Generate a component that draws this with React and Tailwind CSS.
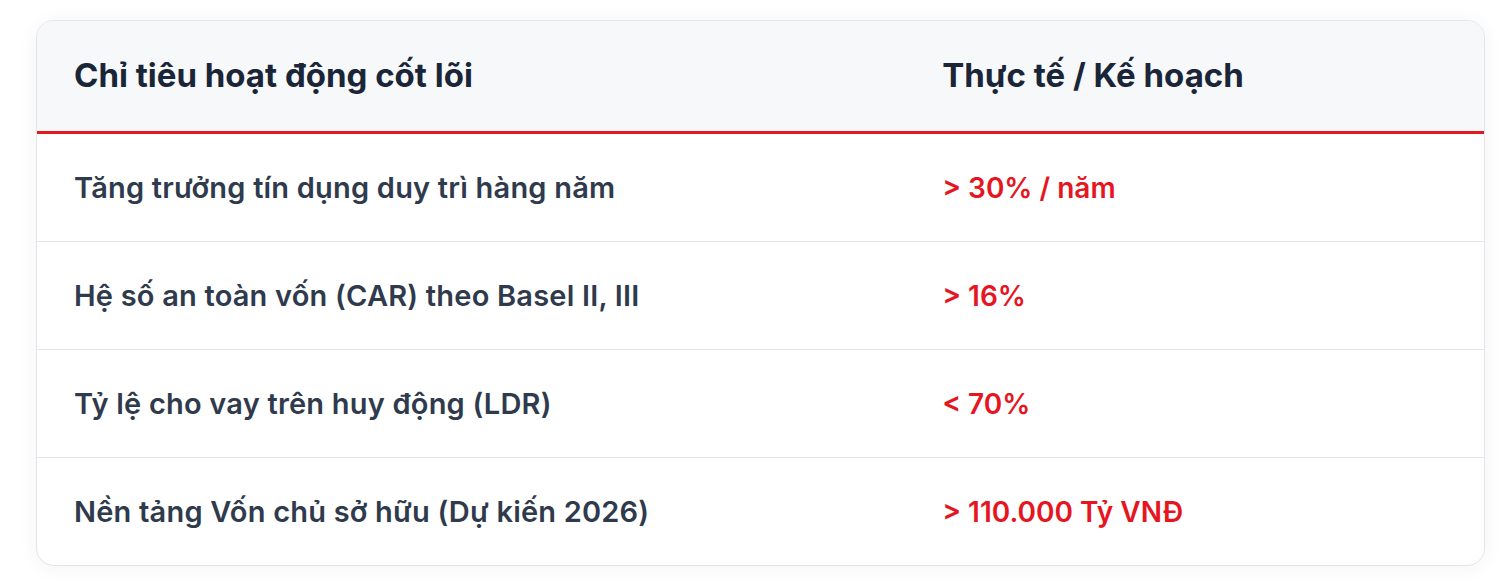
import React from "react";

const rows = [
  ["Tăng trưởng tín dụng duy trì hàng năm", "> 30% / năm"],
  ["Hệ số an toàn vốn (CAR) theo Basel II, III", "> 16%"],
  ["Tỷ lệ cho vay trên huy động (LDR)", "< 70%"],
  ["Nền tảng Vốn chủ sở hữu (Dự kiến 2026)", "> 110.000 Tỷ VNĐ"],
];

export default function App() {
  return (
    <div
      className="w-full h-[588px] bg-white pt-5 pl-9 pr-[27px]"
      style={{ fontFamily: "Inter, 'Noto Sans', sans-serif" }}
    >
      <div className="w-full rounded-[18px] border border-[#e2e5ec] bg-white overflow-hidden shadow-[0_2px_20px_rgba(0,0,0,0.05)]">
        <div className="flex h-[113px] items-center bg-[#f6f8fa] border-b-[3px] border-[#e5161f]">
          <div className="w-[60%] pl-[37px] text-[33px] font-bold text-[#1b2538]">
            Chỉ tiêu hoạt động cốt lõi
          </div>
          <div className="w-[40%] pl-[37px] text-[33px] font-bold text-[#1b2538]">
            Thực tế / Kế hoạch
          </div>
        </div>
        {rows.map(([a, b], i) => (
          <div
            key={i}
            className={
              "flex items-center " +
              (i < rows.length - 1 ? "h-[108px] border-b border-[#e3e7ec]" : "h-[107px]")
            }
          >
            <div className="w-[60%] pl-[37px] text-[29px] tracking-[0.2px] font-semibold text-[#2f3b4d]">
              {a}
            </div>
            <div className="w-[40%] pl-[37px] text-[28px] font-semibold text-[#e5161f]">
              {b}
            </div>
          </div>
        ))}
      </div>
    </div>
  );
}
